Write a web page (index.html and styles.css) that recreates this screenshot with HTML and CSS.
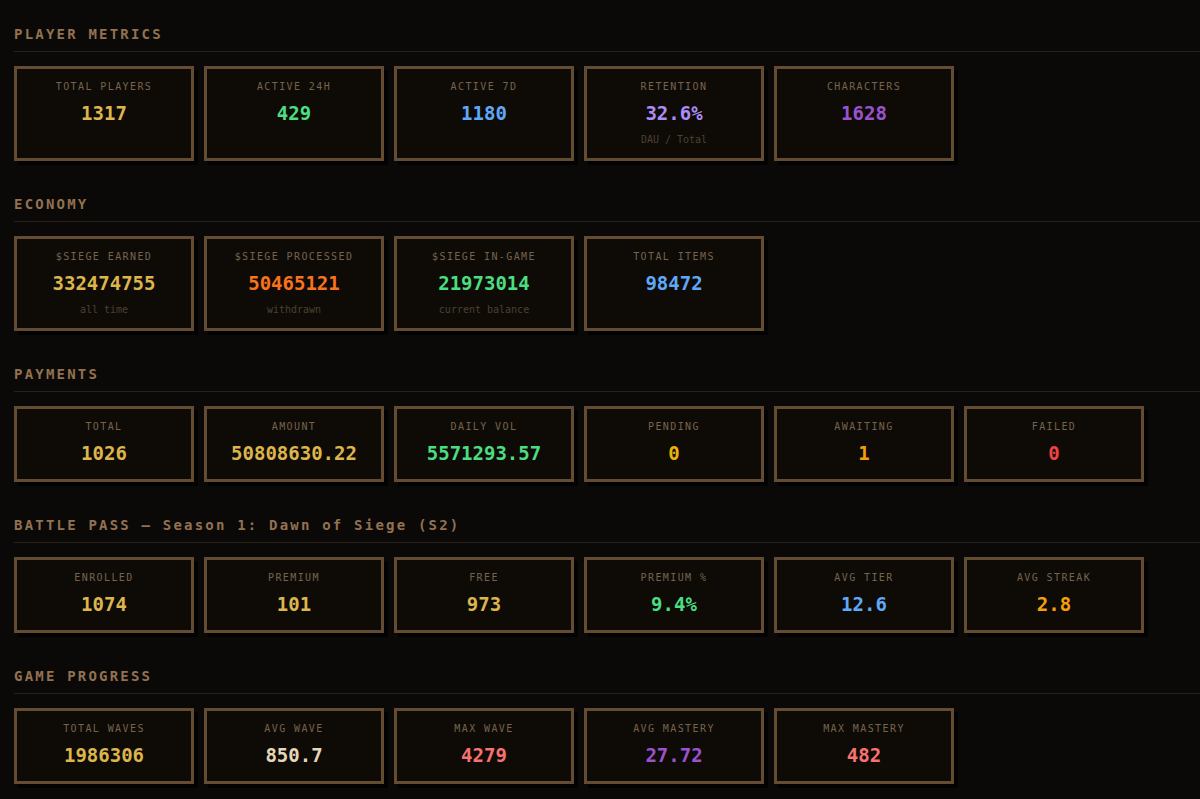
FILE: index.html
```html
<!DOCTYPE html>
<html lang="en">
<head>
  <meta charset="UTF-8">
  <title>Admin — Stats</title>
  <meta name="viewport" content="width=device-width, initial-scale=1.0">
  <link rel="stylesheet" href="styles.css">
</head>
<body>

  <div class="panel">

    <!-- players -->
    <section class="group">
      <h2 class="group-title">PLAYER METRICS</h2>
      <div class="cards">
        <div class="card">
          <div class="card-label">TOTAL PLAYERS</div>
          <div class="card-value gold">1317</div>
        </div>
        <div class="card">
          <div class="card-label">ACTIVE 24H</div>
          <div class="card-value green">429</div>
        </div>
        <div class="card">
          <div class="card-label">ACTIVE 7D</div>
          <div class="card-value blue">1180</div>
        </div>
        <div class="card">
          <div class="card-label">RETENTION</div>
          <div class="card-value lilac">32.6%</div>
          <div class="card-sub">DAU / Total</div>
        </div>
        <div class="card">
          <div class="card-label">CHARACTERS</div>
          <div class="card-value purple">1628</div>
        </div>
      </div>
    </section>

    <!-- economy -->
    <section class="group">
      <h2 class="group-title">ECONOMY</h2>
      <div class="cards">
        <div class="card">
          <div class="card-label">$SIEGE EARNED</div>
          <div class="card-value gold">332474755</div>
          <div class="card-sub">all time</div>
        </div>
        <div class="card">
          <div class="card-label">$SIEGE PROCESSED</div>
          <div class="card-value orange">50465121</div>
          <div class="card-sub">withdrawn</div>
        </div>
        <div class="card">
          <div class="card-label">$SIEGE IN-GAME</div>
          <div class="card-value green">21973014</div>
          <div class="card-sub">current balance</div>
        </div>
        <div class="card">
          <div class="card-label">TOTAL ITEMS</div>
          <div class="card-value blue">98472</div>
        </div>
      </div>
    </section>

    <!-- payments -->
    <section class="group">
      <h2 class="group-title">PAYMENTS</h2>
      <div class="cards">
        <div class="card">
          <div class="card-label">TOTAL</div>
          <div class="card-value gold">1026</div>
        </div>
        <div class="card">
          <div class="card-label">AMOUNT</div>
          <div class="card-value gold">50808630.22</div>
        </div>
        <div class="card">
          <div class="card-label">DAILY VOL</div>
          <div class="card-value green">5571293.57</div>
        </div>
        <div class="card">
          <div class="card-label">PENDING</div>
          <div class="card-value yellow">0</div>
        </div>
        <div class="card">
          <div class="card-label">AWAITING</div>
          <div class="card-value amber">1</div>
        </div>
        <div class="card">
          <div class="card-label">FAILED</div>
          <div class="card-value red">0</div>
        </div>
      </div>
    </section>

    <!-- battle pass -->
    <section class="group">
      <h2 class="group-title">BATTLE PASS — Season 1: Dawn of Siege (S2)</h2>
      <div class="cards">
        <div class="card">
          <div class="card-label">ENROLLED</div>
          <div class="card-value gold">1074</div>
        </div>
        <div class="card">
          <div class="card-label">PREMIUM</div>
          <div class="card-value gold">101</div>
        </div>
        <div class="card">
          <div class="card-label">FREE</div>
          <div class="card-value gold">973</div>
        </div>
        <div class="card">
          <div class="card-label">PREMIUM %</div>
          <div class="card-value green">9.4%</div>
        </div>
        <div class="card">
          <div class="card-label">AVG TIER</div>
          <div class="card-value blue">12.6</div>
        </div>
        <div class="card">
          <div class="card-label">AVG STREAK</div>
          <div class="card-value amber">2.8</div>
        </div>
      </div>
    </section>

    <!-- progress -->
    <section class="group">
      <h2 class="group-title">GAME PROGRESS</h2>
      <div class="cards">
        <div class="card">
          <div class="card-label">TOTAL WAVES</div>
          <div class="card-value gold">1986306</div>
        </div>
        <div class="card">
          <div class="card-label">AVG WAVE</div>
          <div class="card-value sand">850.7</div>
        </div>
        <div class="card">
          <div class="card-label">MAX WAVE</div>
          <div class="card-value salmon">4279</div>
        </div>
        <div class="card">
          <div class="card-label">AVG MASTERY</div>
          <div class="card-value purple">27.72</div>
        </div>
        <div class="card">
          <div class="card-label">MAX MASTERY</div>
          <div class="card-value salmon">482</div>
        </div>
      </div>
    </section>

  </div>

</body>
</html>
```

FILE: styles.css
```css
body {
  margin: 0;
  background-color: #0a0908;
  font-family: 'DejaVu Sans Mono', 'Liberation Mono', monospace;
  color: #c8b08a;
}

.panel {
  padding: 24px 0 20px 14px; /* no right padding, the rule runs to the edge */
}

.group {
  margin-bottom: 33px;
}

.group-title {
  margin: 0 0 14px;
  padding-bottom: 7px;
  border-bottom: 1px solid #2a2017;
  font-size: 14px;
  line-height: 20px;
  font-weight: bold;
  letter-spacing: 2.2px;
  color: #927250;
}

.cards {
  display: flex;
  flex-wrap: wrap;
  gap: 10px;
}

.card {
  width: 180px;
  box-sizing: border-box;
  padding: 11px 8px;
  background-color: #0e0b07;
  border: 3px solid #634c32;
  box-shadow: 4px 4px 0 #020202;
  text-align: center;
}

.card-label {
  font-size: 10px;
  line-height: 14px;
  letter-spacing: 1.4px;
  color: #76634d;
  margin-bottom: 8px;
}

.card-value {
  font-size: 19px;
  line-height: 22px;
  font-weight: bold;
  margin-bottom: 4px;
}

.card-sub {
  font-size: 10px;
  line-height: 14px;
  color: #4d4031;
  margin-top: 9px;
}

/* value colours */
.gold   { color: #dcb54c; }
.green  { color: #4ade80; }
.blue   { color: #5ea8f8; }
.lilac  { color: #ad8cf7; }
.purple { color: #9a52cf; }
.orange { color: #f9731a; }
.yellow { color: #eab308; }
.amber  { color: #f59e0b; }
.red    { color: #ef4444; }
.sand   { color: #e6d6b8; }
.salmon { color: #f87171; }
```
